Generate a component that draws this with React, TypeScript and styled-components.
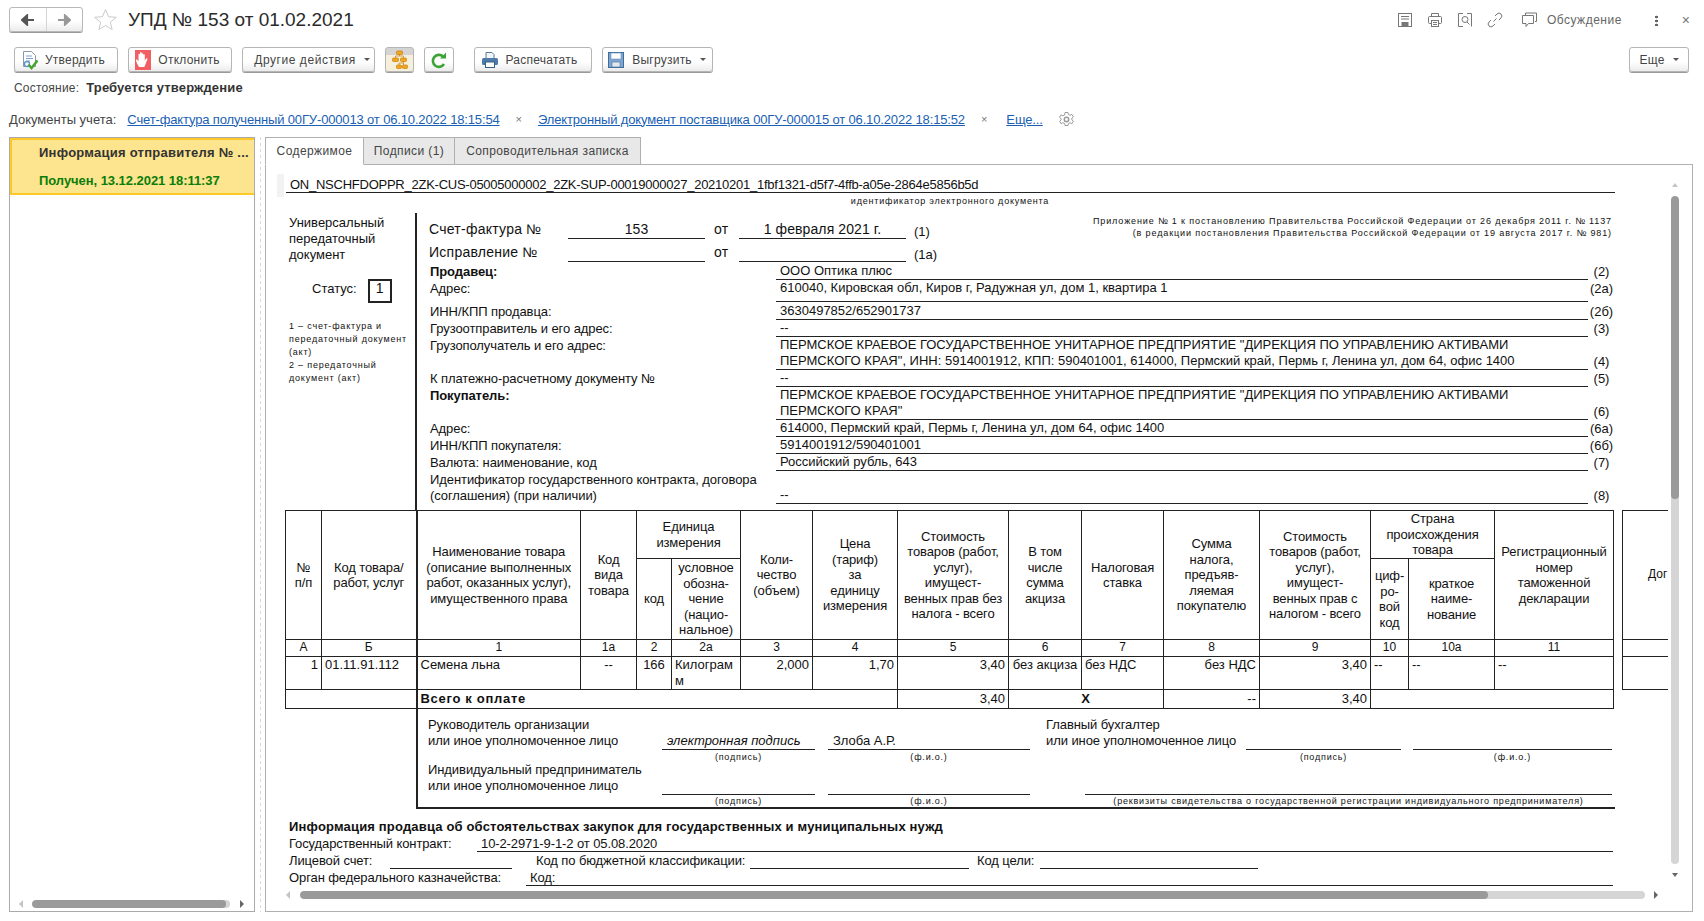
import * as React from "react";
import styled, { createGlobalStyle } from "styled-components";

const GlobalStyle = createGlobalStyle`
  html, body {
    margin: 0;
    padding: 0;
    height: 100%;
    overflow: hidden;
    background: #fff;
  }
  body {
    font-family: "Liberation Sans", Arial, sans-serif;
    color: #333;
  }
  * {
    box-sizing: border-box;
  }
`;

const COLUMNS = [36, 95, 164, 56, 35, 69, 72, 85, 111, 73, 82, 96, 111, 38, 86, 119];
const LETTERS = ["А", "Б", "1", "1а", "2", "2а", "3", "4", "5", "6", "7", "8", "9", "10", "10а", "11"];

const FloppyIcon = () => (
  <svg width="18" height="18" viewBox="0 0 18 18">
    <rect x="1.500" y="1.500" width="15" height="15" fill="#7fa6d0" stroke="#3f6d9e" />
    <rect x="4" y="2" width="10" height="6" fill="#fff" stroke="#6d8fb3" strokeWidth="0.6" />
    <rect x="5" y="11" width="8" height="5" fill="#dfe7ef" stroke="#4d6f93" strokeWidth="0.6" />
  </svg>
);

const ApproveIcon = () => (
  <svg width="20" height="20" viewBox="0 0 20 20">
    <path d="M3.500 1.500h8l4 4v11h-12z" fill="#fff" stroke="#8b98a8" />
    <path d="M6 6h6M6 8.500h7M6 11h4" stroke="#7fa3c9" />
    <circle cx="7" cy="14" r="2.500" fill="none" stroke="#5b94cf" strokeWidth="1.300" />
    <path d="M8.500 14.500l3 3.500 6-7.500" fill="none" stroke="#45a72f" strokeWidth="2.400" />
  </svg>
);

const RejectIcon = () => (
  <svg width="16" height="20" viewBox="0 0 16 20">
    <rect width="16" height="20" fill="#f25f63" />
    <path
      d="M4 17c-1-2-2.500-4-3-6.500-.2-1 1-1.300 1.500-.5l1 1.500V4.500c0-1 1.500-1 1.500 0V3c0-1.200 1.700-1.200 1.700 0v1c0-1 1.600-1 1.600 0v1c0-1 1.500-1 1.500 0v6c.3-1 .8-2 1.500-2.500.8-.5 1.400.2 1 1-1 2-1.500 5-3 7.500z"
      fill="#fff"
    />
  </svg>
);

const TreeIcon = () => (
  <svg width="16" height="20" viewBox="0 0 16 20" fill="#f2a51f" stroke="#c77f0c" strokeWidth="0.7">
    <rect x="4.500" y="1" width="6" height="3.500" rx="1" />
    <rect x="0.500" y="8" width="6" height="3.500" rx="1" />
    <rect x="8.500" y="8" width="6" height="3.500" rx="1" />
    <rect x="4.500" y="15" width="5" height="3.500" rx="1" />
    <rect x="10.500" y="15" width="5" height="3.500" rx="1" />
    <path d="M7.500 4.500V6M3.500 8V6h8v2M11.500 11.500V15M7 15v-2h4.500" fill="none" />
  </svg>
);

const RefreshIcon = () => (
  <svg width="16" height="18" viewBox="0 0 16 18">
    <path d="M13 13a6 6 0 1 1 -1-7.500" fill="none" stroke="#3aa535" strokeWidth="2.600" />
    <path d="M9 7.500h6V1.500z" fill="#3aa535" />
  </svg>
);

const PrinterIcon = () => (
  <svg width="18" height="18" viewBox="0 0 18 18">
    <path d="M5 7V1.500h6l2 2V7" fill="#f3f6f9" stroke="#5a7a99" />
    <rect x="1" y="7" width="16" height="7" rx="1.500" fill="#4d7aa8" />
    <rect x="4.500" y="11" width="9" height="5.500" fill="#fff" stroke="#3a5f85" />
  </svg>
);

const BackIcon = ({ color }: { color: string }) => (
  <svg width="14" height="12" viewBox="0 0 14 12">
    <path d="M13 6H6M6 1.500L1 6l5 4.500z" fill={color} stroke={color} strokeWidth="2.200" />
  </svg>
);

const ForwardIcon = ({ color }: { color: string }) => (
  <svg width="14" height="12" viewBox="0 0 14 12">
    <path d="M1 6h7M8 1.500L13 6l-5 4.500z" fill={color} stroke={color} strokeWidth="2.200" />
  </svg>
);

const StarIcon = () => (
  <svg width="23" height="22" viewBox="0 0 23 22">
    <path
      d="M11.500 1.500l3 7.200 7.800.6-6 5 1.900 7.200-6.700-4-6.700 4 1.900-7.200-6-5 7.800-.6z"
      fill="#fff"
      stroke="#c9c9c9"
    />
  </svg>
);

const SaveGlyph = () => (
  <svg width="16" height="16" viewBox="0 0 16 16" fill="none" stroke="#777">
    <rect x="1.500" y="1.500" width="13" height="13" />
    <path d="M4 4.500h8M4 7h8" />
    <rect x="5" y="10.500" width="6" height="4" fill="#777" />
  </svg>
);

const PrintGlyph = () => (
  <svg width="16" height="16" viewBox="0 0 16 16" fill="none" stroke="#777">
    <path d="M4.500 4.500v-3h7v3" />
    <rect x="1.500" y="4.500" width="13" height="7" rx="1" />
    <rect x="4.500" y="8.500" width="7" height="6" fill="#fff" />
    <path d="M6 10.500h4M6 12.500h4" />
  </svg>
);

const PreviewGlyph = () => (
  <svg width="16" height="16" viewBox="0 0 16 16" fill="none" stroke="#777">
    <path d="M6 1.500H1.500v13H6M10 1.500h4.500v13" />
    <circle cx="8" cy="7.500" r="3" />
    <path d="M10 10l2.500 2.500" />
  </svg>
);

const LinkGlyph = () => (
  <svg width="16" height="16" viewBox="0 0 16 16" fill="none" stroke="#777">
    <path d="M6.500 9.500l3-3M8 4l2-2a2.800 2.800 0 0 1 4 4l-2 2M8 12l-2 2a2.800 2.800 0 0 1-4-4l2-2" />
  </svg>
);

const ChatGlyph = () => (
  <svg width="17" height="16" viewBox="0 0 17 16" fill="none" stroke="#777">
    <path d="M4.500 3.500V1h11v8.500H14" />
    <path d="M1.500 3.500h11v8h-5l-2.500 3v-3H1.500z" fill="#fff" />
  </svg>
);

const GearGlyph = () => (
  <svg width="17" height="17" viewBox="0 0 17 17" fill="none" stroke="#9a9a9a">
    <circle cx="8.500" cy="8.500" r="2.200" strokeWidth="1.500" />
    <path d="M7 1.500h3l.4 2 1.700.8 1.800-1 1.500 2.500-1.500 1.300v1.800l1.500 1.300-1.500 2.500-1.800-1-1.700.8-.4 2H7l-.4-2-1.700-.8-1.800 1-1.500-2.500 1.500-1.300V7.600L1.600 6.300l1.500-2.500 1.800 1 1.700-.8z" />
  </svg>
);

const Page = styled.div`
  width: 1704px;
  height: 921px;
  display: flex;
  flex-direction: column;
  overflow: hidden;
`;

const Header = styled.div`
  height: 47px;
  padding: 7px 14px 0 9px;
  display: flex;
  align-items: flex-start;
`;

const NavGroup = styled.div`
  width: 74px;
  height: 25px;
  display: flex;
  border: 1px solid #b8b8b8;
  border-radius: 3px;
  background: linear-gradient(#fff 55%, #ececec);
  box-shadow: 0 1px 0 #999;
`;

const NavButton = styled.div<{ $divided?: boolean }>`
  flex: 1;
  display: flex;
  align-items: center;
  justify-content: center;
  border-right: ${(p) => (p.$divided ? "1px solid #d5d5d5" : "none")};
`;

const StarSlot = styled.div`
  margin: 1px 11px 0 11px;
  height: 22px;
`;

const Title = styled.h1`
  margin: 1px 0 0;
  font-size: 19px;
  line-height: 23px;
  font-weight: 400;
  color: #2b2b2b;
`;

const HeaderTools = styled.div`
  margin-left: auto;
  display: flex;
  align-items: center;
  height: 26px;
`;

const ToolGlyph = styled.span<{ $gap: number }>`
  display: flex;
  margin-right: ${(p) => p.$gap}px;
`;

const DiscussLabel = styled.span`
  font-size: 12px;
  color: #666;
  letter-spacing: 0.5px;
  margin-left: 9px;
`;

const Dots = styled.span`
  margin-left: 33px;
  width: 3px;
  height: 11px;
  background: radial-gradient(circle, #666 1.200px, transparent 1.600px) 0 0 / 3px 4px repeat-y;
`;

const CloseMark = styled.span`
  margin-left: 24px;
  font-size: 14px;
  color: #777;
`;

const Toolbar = styled.div`
  height: 26px;
  padding: 0 15px 0 14px;
  display: flex;
  gap: 10px;
`;

const ToolButton = styled.button<{
  $width: number;
  $pressed?: boolean;
  $after?: number;
  $push?: boolean;
  $nudge?: number;
  $lead?: number;
  $gap?: number;
  $spacing?: number;
}>`
  width: ${(p) => p.$width}px;
  height: 25px;
  padding: 0 ${(p) => p.$nudge ?? 0}px 0 ${(p) => p.$lead ?? 0}px;
  margin-right: ${(p) => p.$after ?? 0}px;
  margin-left: ${(p) => (p.$push ? "auto" : "0")};
  display: flex;
  align-items: center;
  justify-content: center;
  gap: ${(p) => p.$gap ?? 7}px;
  border: 1px solid #b5b5b5;
  border-radius: 3px;
  background: ${(p) =>
    p.$pressed
      ? "linear-gradient(#d4d4d4 30%, #f5efdc 30%, #f5efdc)"
      : "linear-gradient(#fff 60%, #ececec)"};
  box-shadow: 0 1px 0 #9a9a9a;
  font-family: inherit;
  font-size: 12px;
  letter-spacing: ${(p) => p.$spacing ?? 0.25}px;
  color: #444;
`;

const Caret = styled.span`
  width: 0;
  height: 0;
  border-left: 3px solid transparent;
  border-right: 3px solid transparent;
  border-top: 3px solid #555;
  margin-left: 1px;
`;

const StatusRow = styled.div`
  margin-top: 7px;
  height: 16px;
  padding-left: 14px;
  font-size: 12px;
  line-height: 16px;
  letter-spacing: 0.2px;
  color: #444;
`;

const StatusValue = styled.b`
  margin-left: 7px;
  font-size: 13px;
  letter-spacing: 0.15px;
  color: #333;
`;

const DocsRow = styled.div`
  margin-top: 15px;
  height: 16px;
  padding-left: 9px;
  display: flex;
  align-items: center;
  font-size: 13px;
  color: #444;
`;

const DocLink = styled.a<{ $left: number }>`
  margin-left: ${(p) => p.$left}px;
  color: #1a5fb4;
  letter-spacing: -0.15px;
  text-decoration: underline;
  white-space: nowrap;
`;

const Remove = styled.span`
  margin-left: 16px;
  color: #777;
  font-size: 11px;
`;

const GearSlot = styled.span`
  margin-left: 15px;
  display: flex;
`;

const Main = styled.div`
  flex: 1;
  min-height: 0;
  margin-top: 10px;
  padding: 0 11px 9px 9px;
  display: flex;
`;

const ListPanel = styled.div`
  width: 246px;
  border: 1px solid #aaa;
  display: flex;
  flex-direction: column;
`;

const ListItem = styled.div`
  height: 57px;
  padding: 5px 0 0 27px;
  background: #fde48e;
  border: 2px solid #fec928;
  border-right: none;
  font-size: 13px;
  font-weight: 700;
  white-space: nowrap;
`;

const ListLine = styled.div<{ $green?: boolean }>`
  height: 28px;
  line-height: 16px;
  letter-spacing: ${(p) => (p.$green ? "-0.05px" : "0.25px")};
  color: ${(p) => (p.$green ? "#0a7d0a" : "#333")};
`;

const ListScroll = styled.div`
  margin-top: auto;
  height: 11px;
  padding: 0 9px 3px 9px;
  display: flex;
  align-items: center;
`;

const Splitter = styled.div`
  width: 10px;
  background: repeating-linear-gradient(#d8d8d8 0 3px, transparent 3px 6px) center / 1px 100% no-repeat;
`;

const RightColumn = styled.div`
  flex: 1;
  display: flex;
  flex-direction: column;
  min-width: 0;
`;

const TabBar = styled.div`
  display: flex;
  height: 28px;
  margin-bottom: -1px;
`;

const Tab = styled.div<{ $width: number; $active?: boolean }>`
  width: ${(p) => p.$width}px;
  height: 28px;
  text-align: center;
  line-height: 26px;
  font-size: 12px;
  letter-spacing: 0.4px;
  color: #444;
  border: 1px solid #b0b0b0;
  border-left: ${(p) => (p.$active ? "1px solid #b0b0b0" : "none")};
  border-bottom: ${(p) => (p.$active ? "1px solid #fff" : "1px solid #b0b0b0")};
  background: ${(p) => (p.$active ? "#fff" : "#e8e8e8")};
  position: relative;
  z-index: ${(p) => (p.$active ? 1 : 0)};
`;

const Panel = styled.div`
  flex: 1;
  min-height: 0;
  border: 1px solid #b0b0b0;
  display: grid;
  grid-template-columns: 1402px 1fr;
  grid-template-rows: 1fr 22px;
`;

const Sheet = styled.div`
  overflow: hidden;
  padding: 9px 0 0 11px;
  color: #111;
  font-size: 13px;
  line-height: 16px;
`;

const VScroll = styled.div`
  padding: 18px 0 0 3px;
  display: flex;
  flex-direction: column;
  align-items: flex-start;
`;

const ScrollTrack = styled.div<{ $vertical?: boolean; $length: number }>`
  background: #d5d5d5;
  border-radius: 4px;
  flex: none;
  width: ${(p) => (p.$vertical ? "8px" : `${p.$length}px`)};
  height: ${(p) => (p.$vertical ? `${p.$length}px` : "8px")};
  overflow: hidden;
`;

const ScrollThumb = styled.div<{ $vertical?: boolean; $length: number }>`
  background: #9a9a9a;
  border-radius: 4px;
  width: ${(p) => (p.$vertical ? "8px" : `${p.$length}px`)};
  height: ${(p) => (p.$vertical ? `${p.$length}px` : "8px")};
`;

const HScroll = styled.div`
  padding: 1px 0 0 20px;
  height: 10px;
  display: flex;
  align-items: center;
  grid-column: 1 / 3;
`;

const ArrowLeft = styled.span<{ $gap: number }>`
  flex: none;
  margin-right: ${(p) => p.$gap}px;
  border-top: 4px solid transparent;
  border-bottom: 4px solid transparent;
  border-right: 4px solid #c4c4c4;
`;

const ArrowRight = styled.span<{ $gap: number }>`
  flex: none;
  margin-left: ${(p) => p.$gap}px;
  border-top: 4px solid transparent;
  border-bottom: 4px solid transparent;
  border-left: 4px solid #666;
`;

const ArrowUp = styled.span`
  margin: 0 0 9px 1px;
  border-left: 3px solid transparent;
  border-right: 3px solid transparent;
  border-bottom: 4px solid #c4c4c4;
`;

const ArrowDown = styled.span`
  margin: 9px 0 0 1px;
  border-left: 3px solid transparent;
  border-right: 3px solid transparent;
  border-top: 4px solid #666;
`;

const IdRow = styled.div`
  display: flex;
  height: 22px;
`;

const GreyMark = styled.div`
  width: 7px;
  height: 23px;
  margin-right: 2px;
  background: #f2f2f2;
`;

const IdValue = styled.div`
  width: 1329px;
  height: 19px;
  padding: 3px 0 0 4px;
  line-height: 16px;
  letter-spacing: -0.25px;
  border-bottom: 1px solid #222;
  white-space: nowrap;
`;

const SheetBody = styled.div`
  margin-left: 8px;
  width: 1330px;
`;

const TinyCaption = styled.div`
  font-size: 9px;
  line-height: 11px;
  letter-spacing: 0.8px;
  text-align: center;
  white-space: nowrap;
`;

const FormBlock = styled.div`
  margin-top: 6px;
  height: 297px;
  display: flex;
`;

const FormaSide = styled.div`
  width: 132px;
  padding: 2px 0 0 4px;
  border-right: 2px solid #222;
`;

const StatusLine = styled.div`
  margin: 16px 0 0 23px;
  height: 24px;
  display: flex;
  align-items: flex-start;
  line-height: 20px;
`;

const StatusBox = styled.div`
  margin-left: 11px;
  width: 24px;
  height: 24px;
  border: 2px solid #222;
  text-align: center;
  font-size: 14px;
  line-height: 15px;
`;

const SideNote = styled.div`
  margin-top: 17px;
  font-size: 9px;
  line-height: 13px;
  letter-spacing: 0.8px;
  white-space: nowrap;
`;

const FormMain = styled.div`
  flex: 1;
  min-width: 0;
`;

const InvoiceHead = styled.div`
  display: flex;
  justify-content: space-between;
  height: 49px;
`;

const InvoiceLines = styled.div`
  display: flex;
  flex-direction: column;
`;

const InvoiceLine = styled.div<{ $height: number }>`
  height: ${(p) => p.$height}px;
  display: grid;
  grid-template-columns: 151px 137px 34px 167px auto;
  align-items: end;
  font-size: 14px;
  line-height: 17px;
  letter-spacing: 0.25px;
`;

const InvoiceLabel = styled.span`
  padding-left: 12px;
  padding-bottom: 1px;
`;

const InvoiceField = styled.span`
  height: 18px;
  text-align: center;
  letter-spacing: 0.1px;
  border-bottom: 1px solid #222;
`;

const InvoiceOf = styled.span`
  padding: 0 0 1px 9px;
`;

const InvoiceRef = styled.span`
  padding: 0 0 0 8px;
  font-size: 13px;
  line-height: 15px;
  letter-spacing: 0;
`;

const Annex = styled.div`
  padding: 2px 3px 0 0;
  font-size: 9px;
  line-height: 12px;
  letter-spacing: 0.88px;
  text-align: right;
  white-space: nowrap;
`;

const FormRow = styled.div<{ $height: number }>`
  height: ${(p) => p.$height}px;
  display: grid;
  grid-template-columns: 359px 812px 27px;
`;

const RowLabel = styled.div<{ $bold?: boolean }>`
  padding: 2px 0 0 13px;
  font-weight: ${(p) => (p.$bold ? 700 : 400)};
  letter-spacing: -0.08px;
  white-space: nowrap;
`;

const RowValue = styled.div<{ $end?: boolean }>`
  padding: 1px 0 0 4px;
  border-bottom: 1px solid #222;
  white-space: nowrap;
  display: flex;
  flex-direction: column;
  justify-content: ${(p) => (p.$end ? "flex-end" : "flex-start")};
`;

const RowRef = styled.div<{ $end?: boolean }>`
  align-self: ${(p) => (p.$end ? "end" : "start")};
  padding-top: ${(p) => (p.$end ? 0 : 2)}px;
  text-align: center;
`;

const TablesRow = styled.div`
  display: flex;
  gap: 8px;
  width: 1500px;
`;

const GoodsTable = styled.table<{ $width: number; $top?: boolean }>`
  width: ${(p) => p.$width}px;
  flex: none;
  align-self: ${(p) => (p.$top ? "flex-start" : "auto")};
  table-layout: fixed;
  border-collapse: collapse;
  font-size: 13px;
  line-height: 15.500px;
`;

const HeadCell = styled.td<{ $thick?: boolean; $height?: number }>`
  height: ${(p) => (p.$height ? `${p.$height}px` : "auto")};
  padding: 0;
  border: 1px solid #222;
  border-left: ${(p) => (p.$thick ? "2px solid #222" : "1px solid #222")};
  text-align: center;
  vertical-align: middle;
  letter-spacing: -0.12px;
  overflow: hidden;
`;

const LetterCell = styled.td<{ $thick?: boolean }>`
  height: 17px;
  padding: 0;
  border: 1px solid #222;
  border-left: ${(p) => (p.$thick ? "2px solid #222" : "1px solid #222")};
  text-align: center;
  font-size: 12px;
`;

const DataCell = styled.td<{ $thick?: boolean; $align?: string }>`
  height: 33px;
  padding: 0 3px;
  border: 1px solid #222;
  border-left: ${(p) => (p.$thick ? "2px solid #222" : "1px solid #222")};
  text-align: ${(p) => p.$align ?? "left"};
  vertical-align: top;
  word-break: break-all;
`;

const TotalCell = styled.td<{ $thick?: boolean; $align?: string; $bold?: boolean }>`
  height: 19px;
  padding: 0 3px;
  border: 1px solid #222;
  border-left: ${(p) => (p.$thick ? "2px solid #222" : "1px solid #222")};
  text-align: ${(p) => p.$align ?? "left"};
  font-weight: ${(p) => (p.$bold ? 700 : 400)};
  letter-spacing: ${(p) => (p.$bold ? "0.7px" : "0")};
`;

const ClippedHead = styled.td`
  height: 129px;
  padding: 0 0 0 25px;
  border: 1px solid #222;
  font-size: 12px;
  white-space: nowrap;
`;

const BlankCell = styled.td<{ $height: number }>`
  height: ${(p) => p.$height}px;
  border: 1px solid #222;
`;

const SignBlock = styled.div`
  margin-left: 131px;
  width: 1199px;
  height: 100px;
  border-left: 2px solid #222;
  border-bottom: 2px solid #222;
  display: grid;
  grid-template-columns: 244px 153px 13px 202px 16px 200px 155px 12px 199px;
  grid-template-rows: 41px 13px 32px 12px;
`;

const SignLabel = styled.div<{ $column: number; $row: number; $left?: number }>`
  grid-column: ${(p) => p.$column};
  grid-row: ${(p) => p.$row};
  align-self: end;
  padding: 0 0 1px ${(p) => p.$left ?? 10}px;
  letter-spacing: -0.08px;
  white-space: nowrap;
`;

const SignField = styled.div<{ $column: string; $row: number; $inset?: number; $italic?: boolean }>`
  grid-column: ${(p) => p.$column};
  grid-row: ${(p) => p.$row};
  align-self: end;
  margin-left: ${(p) => p.$inset ?? 0}px;
  height: 17px;
  padding-left: 5px;
  border-bottom: 1px solid #222;
  font-style: ${(p) => (p.$italic ? "italic" : "normal")};
  white-space: nowrap;
`;

const SignCaption = styled(TinyCaption)<{ $column: string; $row: number; $inset?: number }>`
  grid-column: ${(p) => p.$column};
  grid-row: ${(p) => p.$row};
  align-self: end;
  margin-left: ${(p) => p.$inset ?? 0}px;
`;

const NotesHeading = styled.div`
  margin: 10px 0 0 4px;
  height: 17px;
  font-weight: 700;
  letter-spacing: 0.17px;
  white-space: nowrap;
`;

const NoteRow = styled.div`
  display: flex;
  height: 17px;
  padding-left: 4px;
  letter-spacing: -0.1px;
  white-space: nowrap;
`;

const NoteText = styled.span<{ $width?: number; $left?: number }>`
  width: ${(p) => (p.$width ? `${p.$width}px` : "auto")};
  margin-left: ${(p) => p.$left ?? 0}px;
  flex: none;
  line-height: 15px;
`;

const NoteField = styled.span<{ $width: number; $left?: number }>`
  width: ${(p) => p.$width}px;
  height: 16px;
  margin-left: ${(p) => p.$left ?? 0}px;
  padding-left: 4px;
  flex: none;
  line-height: 15px;
  border-bottom: 1px solid #222;
`;

const ORG_NAME = 'ПЕРМСКОЕ КРАЕВОЕ ГОСУДАРСТВЕННОЕ УНИТАРНОЕ ПРЕДПРИЯТИЕ "ДИРЕКЦИЯ ПО УПРАВЛЕНИЮ АКТИВАМИ';

const App = () => (
  <Page>
    <GlobalStyle />
    <Header>
      <NavGroup>
        <NavButton $divided>
          <BackIcon color="#555" />
        </NavButton>
        <NavButton>
          <ForwardIcon color="#999" />
        </NavButton>
      </NavGroup>
      <StarSlot>
        <StarIcon />
      </StarSlot>
      <Title>УПД № 153 от 01.02.2021</Title>
      <HeaderTools>
        <ToolGlyph $gap={14}>
          <SaveGlyph />
        </ToolGlyph>
        <ToolGlyph $gap={14}>
          <PrintGlyph />
        </ToolGlyph>
        <ToolGlyph $gap={14}>
          <PreviewGlyph />
        </ToolGlyph>
        <ToolGlyph $gap={18}>
          <LinkGlyph />
        </ToolGlyph>
        <ChatGlyph />
        <DiscussLabel>Обсуждение</DiscussLabel>
        <Dots />
        <CloseMark>×</CloseMark>
      </HeaderTools>
    </Header>

    <Toolbar>
      <ToolButton $width={104} $nudge={7} $gap={5}>
        <ApproveIcon />
        Утвердить
      </ToolButton>
      <ToolButton $width={104} $nudge={5}>
        <RejectIcon />
        Отклонить
      </ToolButton>
      <ToolButton $width={133} $spacing={0.55} $lead={7}>
        Другие действия
        <Caret />
      </ToolButton>
      <ToolButton $width={29} $pressed>
        <TreeIcon />
      </ToolButton>
      <ToolButton $width={30} $after={10}>
        <RefreshIcon />
      </ToolButton>
      <ToolButton $width={118} $nudge={8}>
        <PrinterIcon />
        Распечатать
      </ToolButton>
      <ToolButton $width={111} $nudge={2}>
        <FloppyIcon />
        Выгрузить
        <Caret />
      </ToolButton>
      <ToolButton $width={60} $push>
        Еще
        <Caret />
      </ToolButton>
    </Toolbar>

    <StatusRow>
      Состояние:
      <StatusValue>Требуется утверждение</StatusValue>
    </StatusRow>

    <DocsRow>
      Документы учета:
      <DocLink $left={11}>Счет-фактура полученный 00ГУ-000013 от 06.10.2022 18:15:54</DocLink>
      <Remove>×</Remove>
      <DocLink $left={16}>Электронный документ поставщика 00ГУ-000015 от 06.10.2022 18:15:52</DocLink>
      <Remove>×</Remove>
      <DocLink $left={19}>Еще...</DocLink>
      <GearSlot>
        <GearGlyph />
      </GearSlot>
    </DocsRow>

    <Main>
      <ListPanel>
        <ListItem>
          <ListLine>Информация отправителя № ...</ListLine>
          <ListLine $green>Получен, 13.12.2021 18:11:37</ListLine>
        </ListItem>
        <ListScroll>
          <ArrowLeft $gap={9} />
          <ScrollTrack $length={198}>
            <ScrollThumb $length={194} />
          </ScrollTrack>
          <ArrowRight $gap={10} />
        </ListScroll>
      </ListPanel>
      <Splitter />
      <RightColumn>
        <TabBar>
          <Tab $width={99} $active>
            Содержимое
          </Tab>
          <Tab $width={91}>Подписи (1)</Tab>
          <Tab $width={186}>Сопроводительная записка</Tab>
        </TabBar>
        <Panel>
          <Sheet>
            <IdRow>
              <GreyMark />
              <IdValue>ON_NSCHFDOPPR_2ZK-CUS-05005000002_2ZK-SUP-00019000027_20210201_1fbf1321-d5f7-4ffb-a05e-2864e5856b5d</IdValue>
            </IdRow>
            <SheetBody>
              <TinyCaption>идентификатор электронного документа</TinyCaption>
              <FormBlock>
                <FormaSide>
                  Универсальный
                  <br />
                  передаточный
                  <br />
                  документ
                  <StatusLine>
                    Статус:
                    <StatusBox>1</StatusBox>
                  </StatusLine>
                  <SideNote>
                    1 – счет-фактура и
                    <br />
                    передаточный документ
                    <br />
                    (акт)
                    <br />2 – передаточный
                    <br />
                    документ (акт)
                  </SideNote>
                </FormaSide>
                <FormMain>
                  <InvoiceHead>
                    <InvoiceLines>
                      <InvoiceLine $height={26}>
                        <InvoiceLabel>Счет-фактура №</InvoiceLabel>
                        <InvoiceField>153</InvoiceField>
                        <InvoiceOf>от</InvoiceOf>
                        <InvoiceField>1 февраля 2021 г.</InvoiceField>
                        <InvoiceRef>(1)</InvoiceRef>
                      </InvoiceLine>
                      <InvoiceLine $height={23}>
                        <InvoiceLabel>Исправление №</InvoiceLabel>
                        <InvoiceField />
                        <InvoiceOf>от</InvoiceOf>
                        <InvoiceField />
                        <InvoiceRef>(1а)</InvoiceRef>
                      </InvoiceLine>
                    </InvoiceLines>
                    <Annex>
                      Приложение № 1 к постановлению Правительства Российской Федерации от 26 декабря 2011 г. № 1137
                      <br />
                      (в редакции постановления Правительства Российской Федерации от 19 августа 2017 г. № 981)
                    </Annex>
                  </InvoiceHead>
                  <FormRow $height={17}>
                    <RowLabel $bold>Продавец:</RowLabel>
                    <RowValue>ООО Оптика плюс</RowValue>
                    <RowRef>(2)</RowRef>
                  </FormRow>
                  <FormRow $height={23}>
                    <RowLabel>Адрес:</RowLabel>
                    <RowValue>610040, Кировская обл, Киров г, Радужная ул, дом 1, квартира 1</RowValue>
                    <RowRef>(2а)</RowRef>
                  </FormRow>
                  <FormRow $height={17}>
                    <RowLabel>ИНН/КПП продавца:</RowLabel>
                    <RowValue>3630497852/652901737</RowValue>
                    <RowRef>(2б)</RowRef>
                  </FormRow>
                  <FormRow $height={17}>
                    <RowLabel>Грузоотправитель и его адрес:</RowLabel>
                    <RowValue>--</RowValue>
                    <RowRef>(3)</RowRef>
                  </FormRow>
                  <FormRow $height={33}>
                    <RowLabel>Грузополучатель и его адрес:</RowLabel>
                    <RowValue>
                      <span>{ORG_NAME}</span>
                      <span>ПЕРМСКОГО КРАЯ", ИНН: 5914001912, КПП: 590401001, 614000, Пермский край, Пермь г, Ленина ул, дом 64, офис 1400</span>
                    </RowValue>
                    <RowRef $end>(4)</RowRef>
                  </FormRow>
                  <FormRow $height={17}>
                    <RowLabel>К платежно-расчетному документу №</RowLabel>
                    <RowValue>--</RowValue>
                    <RowRef>(5)</RowRef>
                  </FormRow>
                  <FormRow $height={33}>
                    <RowLabel $bold>Покупатель:</RowLabel>
                    <RowValue>
                      <span>{ORG_NAME}</span>
                      <span>ПЕРМСКОГО КРАЯ"</span>
                    </RowValue>
                    <RowRef $end>(6)</RowRef>
                  </FormRow>
                  <FormRow $height={17}>
                    <RowLabel>Адрес:</RowLabel>
                    <RowValue>614000, Пермский край, Пермь г, Ленина ул, дом 64, офис 1400</RowValue>
                    <RowRef>(6а)</RowRef>
                  </FormRow>
                  <FormRow $height={17}>
                    <RowLabel>ИНН/КПП покупателя:</RowLabel>
                    <RowValue>5914001912/590401001</RowValue>
                    <RowRef>(6б)</RowRef>
                  </FormRow>
                  <FormRow $height={17}>
                    <RowLabel>Валюта: наименование, код</RowLabel>
                    <RowValue>Российский рубль, 643</RowValue>
                    <RowRef>(7)</RowRef>
                  </FormRow>
                  <FormRow $height={33}>
                    <RowLabel>
                      Идентификатор государственного контракта, договора
                      <br />
                      (соглашения) (при наличии)
                    </RowLabel>
                    <RowValue $end>--</RowValue>
                    <RowRef $end>(8)</RowRef>
                  </FormRow>
                </FormMain>
              </FormBlock>

              <TablesRow>
                <GoodsTable $width={1329}>
                  <colgroup>
                    {COLUMNS.map((width, index) => (
                      <col key={index} width={width} />
                    ))}
                  </colgroup>
                  <tbody>
                    <tr>
                      <HeadCell rowSpan={2}>
                        №
                        <br />
                        п/п
                      </HeadCell>
                      <HeadCell rowSpan={2}>
                        Код товара/
                        <br />
                        работ, услуг
                      </HeadCell>
                      <HeadCell rowSpan={2} $thick>
                        Наименование товара
                        <br />
                        (описание выполненных
                        <br />
                        работ, оказанных услуг),
                        <br />
                        имущественного права
                      </HeadCell>
                      <HeadCell rowSpan={2}>
                        Код
                        <br />
                        вида
                        <br />
                        товара
                      </HeadCell>
                      <HeadCell colSpan={2} $height={48}>
                        Единица
                        <br />
                        измерения
                      </HeadCell>
                      <HeadCell rowSpan={2}>
                        Коли-
                        <br />
                        чество
                        <br />
                        (объем)
                      </HeadCell>
                      <HeadCell rowSpan={2}>
                        Цена
                        <br />
                        (тариф)
                        <br />
                        за
                        <br />
                        единицу
                        <br />
                        измерения
                      </HeadCell>
                      <HeadCell rowSpan={2}>
                        Стоимость
                        <br />
                        товаров (работ,
                        <br />
                        услуг),
                        <br />
                        имущест-
                        <br />
                        венных прав без
                        <br />
                        налога - всего
                      </HeadCell>
                      <HeadCell rowSpan={2}>
                        В том
                        <br />
                        числе
                        <br />
                        сумма
                        <br />
                        акциза
                      </HeadCell>
                      <HeadCell rowSpan={2}>
                        Налоговая
                        <br />
                        ставка
                      </HeadCell>
                      <HeadCell rowSpan={2}>
                        Сумма
                        <br />
                        налога,
                        <br />
                        предъяв-
                        <br />
                        ляемая
                        <br />
                        покупателю
                      </HeadCell>
                      <HeadCell rowSpan={2}>
                        Стоимость
                        <br />
                        товаров (работ,
                        <br />
                        услуг),
                        <br />
                        имущест-
                        <br />
                        венных прав с
                        <br />
                        налогом - всего
                      </HeadCell>
                      <HeadCell colSpan={2}>
                        Страна
                        <br />
                        происхождения
                        <br />
                        товара
                      </HeadCell>
                      <HeadCell rowSpan={2}>
                        Регистрационный
                        <br />
                        номер
                        <br />
                        таможенной
                        <br />
                        декларации
                      </HeadCell>
                    </tr>
                    <tr>
                      <HeadCell $height={81}>код</HeadCell>
                      <HeadCell>
                        условное
                        <br />
                        обозна-
                        <br />
                        чение
                        <br />
                        (нацио-
                        <br />
                        нальное)
                      </HeadCell>
                      <HeadCell>
                        циф-
                        <br />
                        ро-
                        <br />
                        вой
                        <br />
                        код
                      </HeadCell>
                      <HeadCell>
                        краткое
                        <br />
                        наиме-
                        <br />
                        нование
                      </HeadCell>
                    </tr>
                    <tr>
                      {LETTERS.map((letter, index) => (
                        <LetterCell key={letter} $thick={index === 2}>
                          {letter}
                        </LetterCell>
                      ))}
                    </tr>
                    <tr>
                      <DataCell $align="right">1</DataCell>
                      <DataCell>01.11.91.112</DataCell>
                      <DataCell $thick>Семена льна</DataCell>
                      <DataCell $align="center">--</DataCell>
                      <DataCell $align="center">166</DataCell>
                      <DataCell>Килограмм</DataCell>
                      <DataCell $align="right">2,000</DataCell>
                      <DataCell $align="right">1,70</DataCell>
                      <DataCell $align="right">3,40</DataCell>
                      <DataCell $align="center">без акциза</DataCell>
                      <DataCell>без НДС</DataCell>
                      <DataCell $align="right">без НДС</DataCell>
                      <DataCell $align="right">3,40</DataCell>
                      <DataCell>--</DataCell>
                      <DataCell>--</DataCell>
                      <DataCell>--</DataCell>
                    </tr>
                    <tr>
                      <TotalCell colSpan={2} />
                      <TotalCell colSpan={6} $thick $bold>
                        Всего к оплате
                      </TotalCell>
                      <TotalCell $align="right">3,40</TotalCell>
                      <TotalCell colSpan={2} $align="center" $bold>
                        Х
                      </TotalCell>
                      <TotalCell $align="right">--</TotalCell>
                      <TotalCell $align="right">3,40</TotalCell>
                      <TotalCell colSpan={3} />
                    </tr>
                  </tbody>
                </GoodsTable>
                <GoodsTable $width={140} $top>
                  <tbody>
                    <tr>
                      <ClippedHead>Дог</ClippedHead>
                    </tr>
                    <tr>
                      <BlankCell $height={17} />
                    </tr>
                    <tr>
                      <BlankCell $height={33} />
                    </tr>
                  </tbody>
                </GoodsTable>
              </TablesRow>

              <SignBlock>
                <SignLabel $column={1} $row={1}>
                  Руководитель организации
                  <br />
                  или иное уполномоченное лицо
                </SignLabel>
                <SignField $column="2" $row={1} $italic>
                  электронная подпись
                </SignField>
                <SignField $column="4" $row={1}>
                  Злоба А.Р.
                </SignField>
                <SignLabel $column={6} $row={1} $left={0}>
                  Главный бухгалтер
                  <br />
                  или иное уполномоченное лицо
                </SignLabel>
                <SignField $column="7" $row={1} />
                <SignField $column="9" $row={1} />
                <SignCaption $column="2" $row={2}>
                  (подпись)
                </SignCaption>
                <SignCaption $column="4" $row={2}>
                  (ф.и.о.)
                </SignCaption>
                <SignCaption $column="7" $row={2}>
                  (подпись)
                </SignCaption>
                <SignCaption $column="9" $row={2}>
                  (ф.и.о.)
                </SignCaption>
                <SignLabel $column={1} $row={3}>
                  Индивидуальный предприниматель
                  <br />
                  или иное уполномоченное лицо
                </SignLabel>
                <SignField $column="2" $row={3} />
                <SignField $column="4" $row={3} />
                <SignField $column="6 / 10" $row={3} $inset={39} />
                <SignCaption $column="2" $row={4}>
                  (подпись)
                </SignCaption>
                <SignCaption $column="4" $row={4}>
                  (ф.и.о.)
                </SignCaption>
                <SignCaption $column="6 / 10" $row={4} $inset={39}>
                  (реквизиты свидетельства о государственной  регистрации индивидуального предпринимателя)
                </SignCaption>
              </SignBlock>

              <NotesHeading>Информация продавца об обстоятельствах закупок для государственных и муниципальных нужд</NotesHeading>
              <NoteRow>
                <NoteText $width={188}>Государственный контракт:</NoteText>
                <NoteField $width={1136}>10-2-2971-9-1-2 от 05.08.2020</NoteField>
              </NoteRow>
              <NoteRow>
                <NoteText $width={101}>Лицевой счет:</NoteText>
                <NoteField $width={122} />
                <NoteText $width={214} $left={24}>
                  Код по бюджетной классификации:
                </NoteText>
                <NoteField $width={219} />
                <NoteText $width={63} $left={8}>
                  Код цели:
                </NoteText>
                <NoteField $width={218} />
              </NoteRow>
              <NoteRow>
                <NoteText $width={237}>Орган федерального казначейства:</NoteText>
                <NoteField $width={1087}>Код:</NoteField>
              </NoteRow>
            </SheetBody>
          </Sheet>
          <VScroll>
            <ArrowUp />
            <ScrollTrack $vertical $length={668}>
              <ScrollThumb $vertical $length={303} />
            </ScrollTrack>
            <ArrowDown />
          </VScroll>
          <HScroll>
            <ArrowLeft $gap={10} />
            <ScrollTrack $length={1345}>
              <ScrollThumb $length={1188} />
            </ScrollTrack>
            <ArrowRight $gap={9} />
          </HScroll>
        </Panel>
      </RightColumn>
    </Main>
  </Page>
);

export default App;
